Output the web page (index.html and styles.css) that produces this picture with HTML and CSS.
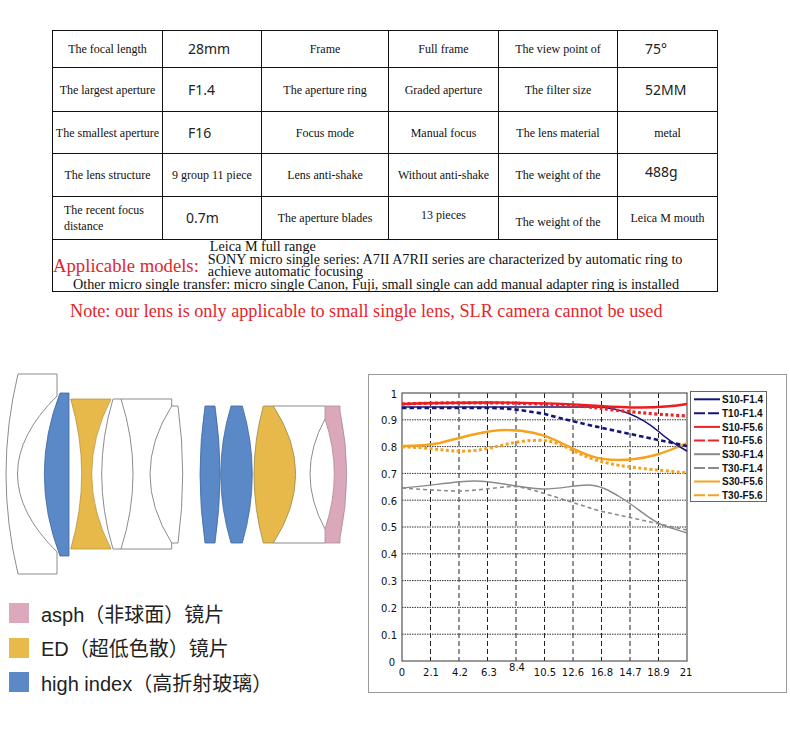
FILE: index.html
```html
<!DOCTYPE html>
<html>
<head>
<meta charset="utf-8">
<link rel="stylesheet" href="styles.css">
</head>
<body>
<table class="spec">
  <colgroup>
    <col class="c1"><col class="c2"><col class="c3"><col class="c4"><col class="c5"><col class="c6">
  </colgroup>
  <tr class="r1">
    <td>The focal length</td>
    <td class="v">28mm</td>
    <td>Frame</td>
    <td>Full frame</td>
    <td>The view point of</td>
    <td class="v v6">75°</td>
  </tr>
  <tr class="r2">
    <td>The largest aperture</td>
    <td class="v">F1.4</td>
    <td>The aperture ring</td>
    <td>Graded aperture</td>
    <td>The filter size</td>
    <td class="v v6">52MM</td>
  </tr>
  <tr class="r3">
    <td>The smallest aperture</td>
    <td class="v">F16</td>
    <td>Focus mode</td>
    <td>Manual focus</td>
    <td>The lens material</td>
    <td>metal</td>
  </tr>
  <tr class="r4">
    <td>The lens structure</td>
    <td>9 group 11 piece</td>
    <td>Lens anti-shake</td>
    <td>Without anti-shake</td>
    <td>The weight of the</td>
    <td class="v v6 up">488g</td>
  </tr>
  <tr class="r5">
    <td class="two">The recent focus<br>distance</td>
    <td class="v v07">0.7m</td>
    <td>The aperture blades</td>
    <td class="up">13 pieces</td>
    <td class="down">The weight of the</td>
    <td>Leica M mouth</td>
  </tr>
  <tr class="r6">
    <td colspan="6" class="app">
      <div class="app-top">
        <span class="app-label">Applicable models:</span>
        <div class="app-lines">
          <div class="indent">Leica M full range</div>
          <div>SONY micro single series: A7II A7RII series are characterized by automatic ring to</div>
          <div>achieve automatic focusing</div>
        </div>
      </div>
      <div class="app-last">Other micro single transfer: micro single Canon, Fuji, small single can add manual adapter ring is installed</div>
    </td>
  </tr>
</table>

<p class="note">Note: our lens is only applicable to small single lens, SLR camera cannot be used</p>

<section class="lower">
  <div class="lens-col">
    <svg class="lens" width="360" height="220" viewBox="0 360 360 220" xmlns="http://www.w3.org/2000/svg">
      <g fill="#fff" stroke="#8c8c8c" stroke-width="1">
        <path d="M18,373 L57,373 L57,395 Q-22,473 57,551 L57,573 L18,573 Q-6,473 18,373 Z"/>
      </g>
      <path d="M60,392 L69,392 L69,555 L60,555 Q28.6,473 60,392 Z" fill="#5b88c6" stroke="#3e679f" stroke-width="0.8"/>
      <path d="M70.7,398 L111,398 Q72.4,473 111,548 L70.7,548 Q92.7,473 70.7,398 Z" fill="#e7b94b" stroke="#b9953a" stroke-width="0.8"/>
      <g fill="none" stroke="#8c8c8c" stroke-width="1">
        <path d="M113,398 Q90.4,473 113,548"/>
        <path d="M121,398 Q145,473 121,548"/>
        <path d="M113,398 L171.7,398 L171.7,405"/>
        <path d="M113,548 L171.7,548 L171.7,542"/>
        <path d="M171.7,405 Q128.3,473 171.7,542"/>
        <path d="M171.7,405 L178,405 Q187.4,473 178,542 L171.7,542"/>
      </g>
      <path d="M205,405 L215,405 Q225,473 215,542 L205,542 Q195,473 205,405 Z" fill="#5b88c6" stroke="#3e679f" stroke-width="0.8"/>
      <path d="M231,405 L242.3,405 Q262.3,473 242.3,542 L231,542 Q210.4,473 231,405 Z" fill="#5b88c6" stroke="#3e679f" stroke-width="0.8"/>
      <g fill="none" stroke="#8c8c8c" stroke-width="1">
        <path d="M273,405 L325,405"/>
        <path d="M273,542 L325,542"/>
        <path d="M325,418 Q295,473 325,528"/>
      </g>
      <path d="M263.3,405 L273.3,405 Q318,473 273.3,542 L263.3,542 Q244.7,473 263.3,405 Z" fill="#e7b94b" stroke="#9a8850" stroke-width="0.8"/>
      <path d="M325,405 L340,405 L340,410 Q353.4,473 340,537 L340,542 L325,542 L325,528 Q343.6,473 325,418 Z" fill="#dba8bb" stroke="#a98a96" stroke-width="0.8"/>
    </svg>
    <ul class="legend">
      <li><span class="sw pink"></span>asph（非球面）镜片</li>
      <li><span class="sw gold"></span>ED（超低色散）镜片</li>
      <li><span class="sw blue"></span>high index（高折射玻璃）</li>
    </ul>
  </div>
  <div class="chart">
    <svg width="419" height="319" viewBox="368 373 419 319" xmlns="http://www.w3.org/2000/svg">
      <rect x="368.5" y="373.5" width="418" height="318" fill="#fff" stroke="#9a9a9a" stroke-width="1"/>
      <g stroke="#333" stroke-width="1" stroke-dasharray="1.5 1">
        <line x1="402" y1="633.2" x2="687" y2="633.2"/>
        <line x1="402" y1="606.4" x2="687" y2="606.4"/>
        <line x1="402" y1="579.6" x2="687" y2="579.6"/>
        <line x1="402" y1="552.8" x2="687" y2="552.8"/>
        <line x1="402" y1="526" x2="687" y2="526"/>
        <line x1="402" y1="499.2" x2="687" y2="499.2"/>
        <line x1="402" y1="472.4" x2="687" y2="472.4"/>
        <line x1="402" y1="445.6" x2="687" y2="445.6"/>
        <line x1="402" y1="418.8" x2="687" y2="418.8"/>
      </g>
      <g stroke="#222" stroke-width="1" stroke-dasharray="5 3">
        <line x1="430.5" y1="392" x2="430.5" y2="660"/>
        <line x1="459" y1="392" x2="459" y2="660"/>
        <line x1="487.5" y1="392" x2="487.5" y2="660"/>
        <line x1="516" y1="392" x2="516" y2="660"/>
        <line x1="544.5" y1="392" x2="544.5" y2="660"/>
        <line x1="573" y1="392" x2="573" y2="660"/>
        <line x1="601.5" y1="392" x2="601.5" y2="660"/>
        <line x1="630" y1="392" x2="630" y2="660"/>
        <line x1="658.5" y1="392" x2="658.5" y2="660"/>
      </g>
      <rect x="402" y="392" width="285" height="268" fill="none" stroke="#555" stroke-width="1.2"/>

      <g fill="none" stroke-linecap="butt" stroke-linejoin="round">
        <path d="M402,487 C430,485 455,480 475,480 C495,480 525,488 545,488 C560,488 575,484 588,484 C600,484 610,490 620,496 C640,508 650,520 665,525 C675,528 680,530 687,532" stroke="#8a8a8a" stroke-width="1.4"/>
        <path d="M402,487 C430,489 445,490 460,490 C490,489 505,484 520,486 C540,490 560,498 600,510 L687,529" stroke="#8a8a8a" stroke-width="1.6" stroke-dasharray="4 3"/>
        <path d="M402,446 C430,446 445,451 468,450 C490,449 505,442 525,440 C545,438 555,440 570,448 C585,456 600,462 630,466 C655,469 670,470 687,472" stroke="#f5a21c" stroke-width="3" stroke-dasharray="3 2.5"/>
        <path d="M402,445 C420,445 430,444 440,442 C470,434 490,429 505,429 C525,429 540,432 555,439 C575,448 590,459 618,459 C645,459 665,452 687,442" stroke="#f5a21c" stroke-width="2.4"/>
        <path d="M402,407 L490,407 C510,407 520,409 545,413 C580,423 640,435 687,445" stroke="#141478" stroke-width="2.6" stroke-dasharray="4.5 3"/>
        <path d="M402,406 L598,406 C620,407 640,415 658,430 C670,441 680,446 687,450" stroke="#141478" stroke-width="1.6"/>
        <path d="M402,403 C450,401 550,401 598,407 C620,410 650,413 687,415" stroke="#e8262a" stroke-width="3.2" stroke-dasharray="3 2.5"/>
        <path d="M402,403 C460,401 540,401 600,405 C630,407 660,408 687,403" stroke="#f01c1c" stroke-width="2.4"/>
      </g>

      <g class="ax" text-anchor="end">
        <text x="397" y="397">1</text>
        <text x="397" y="423">0.9</text>
        <text x="397" y="450">0.8</text>
        <text x="397" y="477">0.7</text>
        <text x="397" y="504">0.6</text>
        <text x="397" y="530">0.5</text>
        <text x="397" y="557">0.4</text>
        <text x="397" y="584">0.3</text>
        <text x="397" y="611">0.2</text>
        <text x="397" y="638">0.1</text>
        <text x="395" y="665">0</text>
      </g>
      <g class="ax" text-anchor="middle">
        <text x="402" y="675">0</text>
        <text x="431" y="675">2.1</text>
        <text x="460" y="675">4.2</text>
        <text x="489" y="675">6.3</text>
        <text x="517" y="670">8.4</text>
        <text x="545" y="675">10.5</text>
        <text x="573" y="675">12.6</text>
        <text x="602" y="675">16.8</text>
        <text x="630.5" y="675">14.7</text>
        <text x="658.5" y="675">18.9</text>
        <text x="686" y="675">21</text>
      </g>

      <rect x="690.5" y="390.5" width="76" height="110" fill="#fff" stroke="#666" stroke-width="1"/>
      <g stroke-width="2">
        <line x1="694" y1="398.3" x2="720" y2="398.3" stroke="#141478"/>
        <line x1="694" y1="412.3" x2="720" y2="412.3" stroke="#141478" stroke-dasharray="11 3"/>
        <line x1="694" y1="425.9" x2="720" y2="425.9" stroke="#e8262a"/>
        <line x1="694" y1="439.6" x2="720" y2="439.6" stroke="#e8262a" stroke-dasharray="11 3"/>
        <line x1="694" y1="453.2" x2="720" y2="453.2" stroke="#8a8a8a"/>
        <line x1="694" y1="466.9" x2="720" y2="466.9" stroke="#8a8a8a" stroke-dasharray="11 3"/>
        <line x1="694" y1="480.5" x2="720" y2="480.5" stroke="#f5a21c"/>
        <line x1="694" y1="494.2" x2="720" y2="494.2" stroke="#f5a21c" stroke-dasharray="11 3"/>
      </g>
      <g class="lg">
        <text x="722" y="402">S10-F1.4</text>
        <text x="722" y="416">T10-F1.4</text>
        <text x="722" y="429.6">S10-F5.6</text>
        <text x="722" y="443.3">T10-F5.6</text>
        <text x="722" y="456.9">S30-F1.4</text>
        <text x="722" y="470.6">T30-F1.4</text>
        <text x="722" y="484.2">S30-F5.6</text>
        <text x="722" y="497.9">T30-F5.6</text>
      </g>
    </svg>
  </div>
</section>
</body>
</html>
```

FILE: styles.css
```css
html, body {
  margin: 0;
  padding: 0;
  background: #fff;
}
body {
  width: 790px;
  font-family: "Liberation Serif", "Times New Roman", serif;
  color: #111;
}
.spec {
  margin: 30px 0 0 52px;
  width: 666px;
  border-collapse: collapse;
  table-layout: fixed;
}
.c1 { width: 110px; }
.c2 { width: 99px; }
.c3 { width: 127px; }
.c4 { width: 110px; }
.c5 { width: 119px; }
.c6 { width: 100px; }
.spec td {
  border: 1px solid #111;
  padding: 0;
  text-align: center;
  vertical-align: middle;
  font-size: 12px;
  line-height: 14px;
  white-space: nowrap;
}
.r1 { height: 37px; }
.r2 { height: 44px; }
.r3 { height: 42px; }
.r4 { height: 43px; }
.r5 { height: 43px; }
.r6 { height: 52px; }
.spec td.v {
  font-family: "Noto Sans", "Open Sans", sans-serif;
  font-size: 14px;
  text-align: left;
  padding-left: 25px;
  color: #222;
}
.spec td.v6 { padding-left: 27px; }
.spec td.v07 { padding-left: 23px; }
.spec td.up { padding-bottom: 6px; }
.spec td.down { padding-top: 8px; }
.spec td.two {
  text-align: left;
  padding-left: 11px;
  line-height: 16px;
  white-space: normal;
}
.spec td.app {
  vertical-align: top;
  text-align: left;
  font-size: 14.2px;
  line-height: 12.5px;
  overflow: hidden;
}
.app-top {
  display: flex;
  align-items: flex-end;
}
.app-label {
  color: #e3262b;
  font-size: 18.7px;
  line-height: 18px;
  margin-bottom: 3px;
  margin-right: 9px;
}
.app-lines .indent { padding-left: 2px; }
.app-last { padding-left: 20px; }
.note {
  margin: 9px 0 0 70px;
  color: #e3262b;
  font-size: 18.2px;
  line-height: 20px;
}
.lower {
  display: flex;
  margin-top: 40px;
}
.lens-col { width: 368px; }
.lens { display: block; }
.legend {
  list-style: none;
  margin: 22px 0 0 9px;
  padding: 0;
  font-family: "Liberation Sans", "Noto Sans CJK SC", sans-serif;
  font-size: 20px;
  color: #222;
}
.legend li {
  display: flex;
  align-items: center;
  gap: 12px;
  height: 20px;
  margin-bottom: 14.5px;
  white-space: nowrap;
}
.sw {
  width: 20px;
  height: 20px;
  flex: none;
}
.pink { background: #dca9bc; }
.gold { background: #e8ba4c; }
.blue { background: #5c89c6; }
.chart {
  margin-top: 13px;
  width: 419px;
  height: 319px;
}
.chart svg { display: block; }
.ax {
  font-family: "DejaVu Sans", Verdana, sans-serif;
  font-size: 10px;
  fill: #111;
}
.lg {
  font-family: "Liberation Sans", Arial, sans-serif;
  font-size: 10px;
  font-weight: bold;
  fill: #111;
}
```
